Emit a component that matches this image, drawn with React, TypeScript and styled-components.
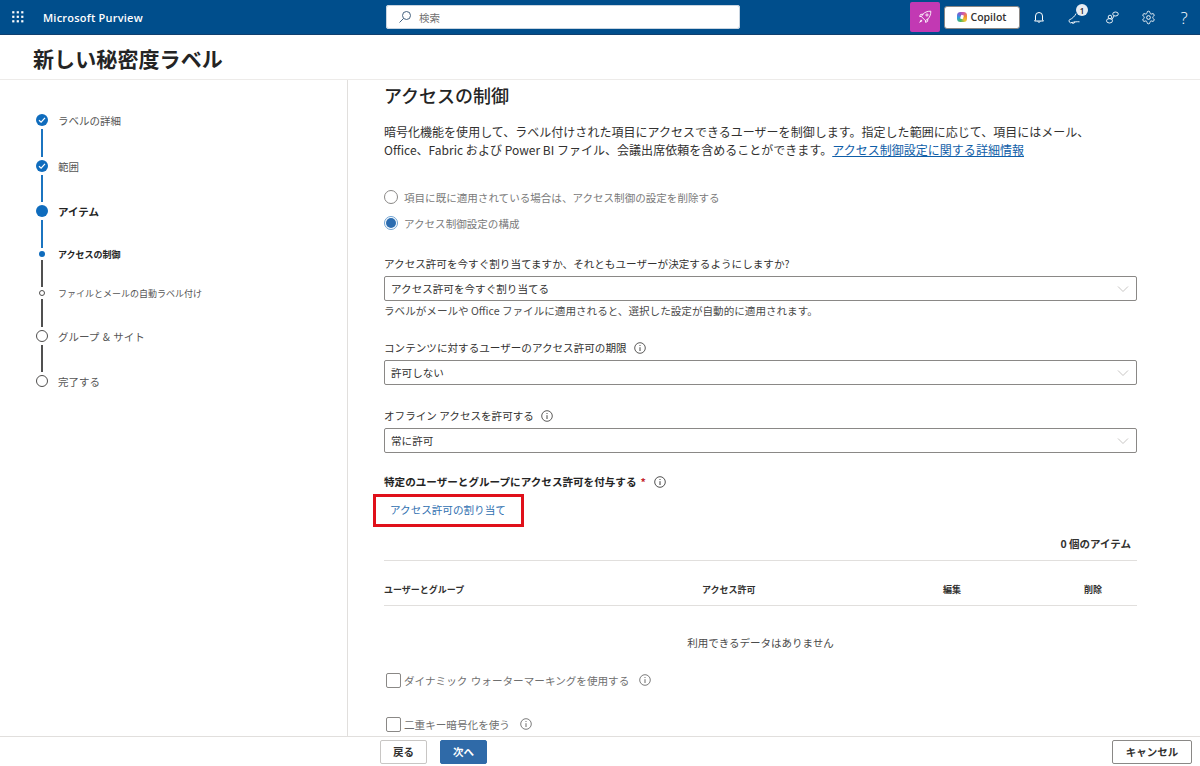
import React from "react";
import styled, { createGlobalStyle } from "styled-components";

const Global = createGlobalStyle`
  html, body { margin: 0; padding: 0; height: 766px; overflow: hidden; background: #fff; }
  body { font-family: "Open Sans", "Noto Sans CJK JP", sans-serif; color: #323130; }
  * { box-sizing: border-box; }
`;

const Page = styled.div`
  width: 1200px; height: 766px; display: flex; flex-direction: column; overflow: hidden;
`;
const TopBar = styled.header`
  height: 35px; flex: none; background: #004e8c; display: flex; align-items: center; color: #fff;
  border-bottom: 1px solid #0f3f6f; position: relative;
`;
const Waffle = styled.button`
  width: 35px; height: 34px; border: 0; background: none; padding: 0; display: flex; align-items: center; justify-content: center; color: #fff;
`;
const Brand = styled.span`
  font-size: 11px; font-weight: 600; margin-left: 8px; width: 343px; letter-spacing: 0.02em;
`;
const Search = styled.div`
  width: 354px; height: 24px; background: #fff; border-radius: 3px; display: flex; align-items: center; padding-left: 12px; gap: 7px;
  font-size: 10.5px; color: #6f6f6f; box-shadow: 0 0 0 1px #c8d4e0 inset; font-family: "Noto Sans CJK JP", sans-serif;
`;
const Right = styled.div`
  margin-left: auto; display: flex; align-items: center; height: 34px;
`;
const Rocket = styled.div`
  width: 30px; height: 30px; background: #c239b3; border-radius: 2px; display: flex; align-items: center; justify-content: center;
`;
const Copilot = styled.div`
  width: 76px; height: 23px; margin-left: 4px; background: #fff; border-radius: 3px; border: 1px solid #8a8886;
  color: #323130; font-size: 10.5px; font-weight: 600; display: flex; align-items: center; justify-content: center; gap: 3px;
`;
const CopilotMark = styled.span`
  width: 10px; height: 10px; border-radius: 35%; position: relative; flex: none;
  background: conic-gradient(from 20deg, #d65ca8, #f28b30, #f2c230, #4cb860, #2a9fe0, #7a60d0, #d65ca8);
  &::after {
    content: ""; position: absolute; left: 3px; top: 3px; width: 4px; height: 4px; border-radius: 1px; background: #fff; transform: rotate(20deg) scaleX(0.7);
  }
`;
const HeadIcon = styled.div<{ $w: number; $pad?: number }>`
  width: ${(p) => p.$w}px; height: 34px; padding-left: ${(p) => p.$pad ?? 0}px; display: flex; align-items: center; justify-content: center; color: #fff; position: relative;
  font-size: 17px; font-weight: 300;
`;
const Badge = styled.span`
  position: absolute; top: 4px; left: 18px; width: 12px; height: 12px; border-radius: 50%; background: #e8edf3; color: #1b1a19;
  font-size: 8px; font-weight: 600; display: flex; align-items: center; justify-content: center;
`;
const TitleBar = styled.div`
  height: 45px; flex: none; border-bottom: 1px solid #edebe9; padding: 8px 0 0 33px;
`;
const PageTitle = styled.h1`
  margin: 0; font-size: 21px; line-height: 31px; font-weight: 700; color: #242424; font-family: "Noto Sans CJK JP", sans-serif; letter-spacing: 0.1px;
`;
const Main = styled.div`
  flex: 1; min-height: 0; display: flex; overflow: hidden;
`;
const Nav = styled.nav`
  width: 348px; flex: none; border-right: 1px solid #e1dfdd; padding: 34px 0 0 36px; display: flex; flex-direction: column; gap: 3px;
`;
const Step = styled.div<{ $h: number }>`
  height: ${(p) => p.$h}px; display: flex; align-items: center; position: relative;
`;
const MarkerSlot = styled.div`
  width: 12px; flex: none; display: flex; align-items: center; justify-content: center;
`;
const Filled = styled.div<{ $d: number }>`
  width: ${(p) => p.$d}px; height: ${(p) => p.$d}px; border-radius: 50%; background: #0f6cbd; flex: none; display: flex; align-items: center; justify-content: center;
`;
const Ring = styled.div<{ $d: number; $b: number }>`
  width: ${(p) => p.$d}px; height: ${(p) => p.$d}px; border-radius: 50%; border: ${(p) => p.$b}px solid #4f4e4d; background: #fff; flex: none;
`;
const StepLabel = styled.span<{ $bold?: boolean; $small?: boolean }>`
  margin-left: 10px; white-space: nowrap; font-family: "Noto Sans CJK JP", sans-serif; word-spacing: 1px;
  font-size: ${(p) => (p.$small ? 9 : 10.5)}px; font-weight: ${(p) => (p.$bold ? 700 : 400)}; color: ${(p) => (p.$bold ? "#242424" : "#555")};
`;
const Connector = styled.div<{ $h: number; $done?: boolean }>`
  width: 2px; height: ${(p) => p.$h}px; margin-left: 5px; flex: none; background: ${(p) => (p.$done ? "#1b74c0" : "#505050")};
`;
const Content = styled.main`
  flex: 1; min-width: 0; padding: 4px 63px 0 36px; overflow: hidden; font-family: "Noto Sans CJK JP", sans-serif;
`;
const H2 = styled.h2`
  margin: 0; font-size: 18px; line-height: 22px; font-weight: 500; color: #242424;
`;
const Desc = styled.div`
  margin: 17px 0 0; font-size: 12px; line-height: 18px; color: #323130; width: 740px; letter-spacing: 0.02px;
`;
const DescLine = styled.div`
  display: flex; white-space: nowrap;
`;
const DescLink = styled.a`
  color: #0f5ea8; text-decoration: underline;
`;
const RadioGroup = styled.div`
  margin-top: 30px; display: flex; flex-direction: column; gap: 10px;
`;
const RadioRow = styled.label`
  height: 16px; display: flex; align-items: center; gap: 6px; font-size: 10.56px; color: #7a7a7a;
`;
const RadioDot = styled.span<{ $on?: boolean }>`
  width: 14px; height: 14px; border-radius: 50%; border: 1px solid ${(p) => (p.$on ? "#6fa3d3" : "#8a8886")}; background: #fff; flex: none;
  display: flex; align-items: center; justify-content: center;
  &::after { content: ""; width: 10px; height: 10px; border-radius: 50%; background: ${(p) => (p.$on ? "#2b6cb0" : "transparent")}; }
`;
const Field = styled.div<{ $top: number }>`
  margin-top: ${(p) => p.$top}px;
`;
const Label = styled.div`
  display: flex; align-items: center; gap: 7px; font-size: 10.58px; line-height: 16px; color: #323130; height: 16px;
`;
const Select = styled.div`
  margin-top: 4px; height: 25px; border: 1px solid #8a8886; border-radius: 2px; display: flex; align-items: center; justify-content: space-between;
  padding: 0 7px 0 6px; font-size: 10.58px; color: #323130; background: #fff;
`;
const Hint = styled.div`
  font-size: 10.58px; line-height: 16px; margin-top: 2px; color: #4a4a4a;
`;
const BoldLabel = styled(Label)`
  font-weight: 700; color: #242424; gap: 8px;
`;
const Star = styled.span`
  color: #c4262e; margin-left: -4px;
`;
const AssignButton = styled.button`
  display: flex; align-items: center; width: 151px; height: 33px; margin: 4px 0 0 -11px; background: #fff; border: 3px solid #e0101a;
  padding: 0 0 2px 14px; color: #2f6fb0; font: inherit; font-size: 10.58px;
`;
const Count = styled.div`
  margin-top: 7px; height: 20px; line-height: 20px; text-align: right; padding-right: 6px; font-size: 10.5px; font-weight: 700; color: #323130;
`;
const TableHead = styled.div`
  margin-top: 6px; height: 46px; border-top: 1px solid #e1dfdd; border-bottom: 1px solid #e1dfdd; display: grid; padding-top: 13px;
  grid-template-columns: 318px 241px 141px 1fr; align-items: center; font-size: 9px; font-weight: 700; color: #323130;
`;
const Empty = styled.div`
  margin-top: 29px; text-align: center; font-size: 10.5px; line-height: 16px; color: #4a4a4a;
`;
const CheckRow = styled.label<{ $top: number }>`
  margin-top: ${(p) => p.$top}px; margin-left: 2px; height: 16px; display: flex; align-items: center; gap: 3px; font-size: 10.6px; color: #6f6f6f; word-spacing: 1px;
`;
const Box = styled.span`
  width: 15px; height: 15px; border: 1px solid #8a8886; border-radius: 2px; background: #fff; flex: none; margin-right: 0;
`;
const InfoWrap = styled.span`
  display: inline-flex; margin-left: 7px; color: #5a5a5a;
`;
const Footer = styled.footer`
  height: 30px; flex: none; border-top: 1px solid #e1dfdd; display: flex; align-items: center; padding: 0 8px 0 380px; gap: 13px; font-family: "Noto Sans CJK JP", sans-serif;
`;
const FootBtn = styled.button<{ $primary?: boolean }>`
  height: 24px; width: 47px; border-radius: 2px; font: inherit; font-size: 10.5px; font-weight: 700; padding: 0;
  border: 1px solid ${(p) => (p.$primary ? "#2f6aa8" : "#c8c6c4")};
  background: ${(p) => (p.$primary ? "#2f6aa8" : "#fff")};
  color: ${(p) => (p.$primary ? "#fff" : "#323130")};
`;
const Cancel = styled(FootBtn)`
  margin-left: auto; width: 80px; border-color: #8a8886;
`;

const Info = ({ size = 12 }: { size?: number }) => (
  <svg width={size} height={size} viewBox="0 0 12 12" fill="none" stroke="currentColor">
    <circle cx="6" cy="6" r="5.3" strokeWidth="0.8" />
    <path d="M6 5.2V9" strokeWidth="0.9" />
    <circle cx="6" cy="3.5" r="0.55" fill="currentColor" stroke="none" />
  </svg>
);
const Chevron = () => (
  <svg width="12" height="8" viewBox="0 0 12 8" fill="none" stroke="#c8c6c4" strokeWidth="1">
    <path d="M1 1.5 6 6.5 11 1.5" />
  </svg>
);
const Check = () => (
  <svg width="8" height="8" viewBox="0 0 8 8" fill="none" stroke="#fff" strokeWidth="1.2">
    <path d="M1 4.2 3.1 6.2 7 1.8" />
  </svg>
);

export default function App() {
  return (
    <Page>
      <Global />
      <TopBar>
        <Waffle aria-label="apps">
          <svg width="12" height="12" viewBox="0 0 12 12" fill="currentColor">
            {[0, 1, 2].flatMap((r) =>
              [0, 1, 2].map((c) => <rect key={`${r}${c}`} x={c * 4.5 + 0.2} y={r * 4.5 + 0.2} width="2.2" height="2.2" />)
            )}
          </svg>
        </Waffle>
        <Brand>Microsoft Purview</Brand>
        <Search>
          <svg width="14" height="14" viewBox="0 0 14 14" fill="none" stroke="#44627f" strokeWidth="1">
            <circle cx="8.5" cy="5.5" r="4" />
            <path d="M5.5 8.5 1.5 12.5" />
          </svg>
          <span>検索</span>
        </Search>
        <Right>
          <Rocket>
            <svg width="14" height="14" viewBox="0 0 14 14" fill="none" stroke="#fff" strokeWidth="0.9">
              <path d="M5 4.2C6.5 2.4 9.5 1 12.8 1.2 13 4.5 11.5 7.5 9.8 9L7.4 10.6 3.4 6.6Z" />
              <circle cx="9" cy="5" r="1.1" />
              <path d="M5 4.2 2.6 4.4 1.6 6.4 3.4 6.6M9.8 9 9.6 11.4 7.6 12.4 7.4 10.6" />
              <path d="M3 9.5 1 13 4.5 11Z" fill="#fff" stroke="none" />
            </svg>
          </Rocket>
          <Copilot>
            <CopilotMark />
            Copilot
          </Copilot>
          <HeadIcon $w={38}>
            <svg width="14" height="14" viewBox="0 0 14 14" fill="none" stroke="currentColor">
              <path d="M3.5 10V6a3.5 3.5 0 0 1 7 0v4l1 1h-9ZM5.8 11.5a1.3 1.3 0 0 0 2.4 0" strokeWidth="1" />
            </svg>
          </HeadIcon>
          <HeadIcon $w={34}>
            <svg width="16" height="16" viewBox="0 0 16 16" fill="none" stroke="currentColor" strokeWidth="0.9">
              <path d="M9 4.5C8 7 5.5 9.5 2.5 10.8 2 11 1.8 11.5 2 12l.7 1.4c.2.4.7.6 1.1.4C7 13 10 12.5 12.5 12.8" />
              <path d="M4.5 13.4a1.8 1.8 0 0 0 3.4-.9" />
            </svg>
            <Badge>1</Badge>
          </HeadIcon>
          <HeadIcon $w={40}>
            <svg width="15" height="15" viewBox="0 0 15 15" fill="none" stroke="currentColor" strokeWidth="0.9">
              <ellipse cx="4.5" cy="10.8" rx="3" ry="2.2" />
              <circle cx="5" cy="7" r="1.8" />
              <ellipse cx="10.5" cy="4" rx="2.8" ry="2" />
              <path d="M7 9.5 9 6" />
            </svg>
          </HeadIcon>
          <HeadIcon $w={32}>
            <svg width="15" height="15" viewBox="0 0 24 24" fill="none" stroke="currentColor" strokeWidth="1.5">
              <path d="M12.22 2h-.44a2 2 0 0 0-2 2v.18a2 2 0 0 1-1 1.73l-.43.25a2 2 0 0 1-2 0l-.15-.08a2 2 0 0 0-2.73.73l-.22.38a2 2 0 0 0 .73 2.73l.15.1a2 2 0 0 1 1 1.72v.51a2 2 0 0 1-1 1.74l-.15.09a2 2 0 0 0-.73 2.73l.22.38a2 2 0 0 0 2.73.73l.15-.08a2 2 0 0 1 2 0l.43.25a2 2 0 0 1 1 1.73V20a2 2 0 0 0 2 2h.44a2 2 0 0 0 2-2v-.18a2 2 0 0 1 1-1.73l.43-.25a2 2 0 0 1 2 0l.15.08a2 2 0 0 0 2.73-.73l.22-.39a2 2 0 0 0-.73-2.73l-.15-.08a2 2 0 0 1-1-1.74v-.5a2 2 0 0 1 1-1.74l.15-.09a2 2 0 0 0 .73-2.73l-.22-.38a2 2 0 0 0-2.73-.73l-.15.08a2 2 0 0 1-2 0l-.43-.25a2 2 0 0 1-1-1.73V4a2 2 0 0 0-2-2z" />
              <circle cx="12" cy="12" r="3" />
            </svg>
          </HeadIcon>
          <HeadIcon $w={36} $pad={4}>?</HeadIcon>
        </Right>
      </TopBar>
      <TitleBar>
        <PageTitle>新しい秘密度ラベル</PageTitle>
      </TitleBar>
      <Main>
        <Nav>
          <Step $h={12}><MarkerSlot><Filled $d={12}><Check /></Filled></MarkerSlot><StepLabel>ラベルの詳細</StepLabel></Step>
          <Connector $h={28} $done />
          <Step $h={12}><MarkerSlot><Filled $d={12}><Check /></Filled></MarkerSlot><StepLabel>範囲</StepLabel></Step>
          <Connector $h={27} $done />
          <Step $h={12}><MarkerSlot><Filled $d={12} /></MarkerSlot><StepLabel $bold>アイテム</StepLabel></Step>
          <Connector $h={28} $done />
          <Step $h={6}><MarkerSlot><Filled $d={6} /></MarkerSlot><StepLabel $bold $small>アクセスの制御</StepLabel></Step>
          <Connector $h={27} />
          <Step $h={6}><MarkerSlot><Ring $d={6} $b={1.5} /></MarkerSlot><StepLabel $small>ファイルとメールの自動ラベル付け</StepLabel></Step>
          <Connector $h={28} />
          <Step $h={12}><MarkerSlot><Ring $d={12} $b={1.5} /></MarkerSlot><StepLabel>グループ &amp; サイト</StepLabel></Step>
          <Connector $h={27} />
          <Step $h={12}><MarkerSlot><Ring $d={12} $b={1.5} /></MarkerSlot><StepLabel>完了する</StepLabel></Step>
        </Nav>
        <Content>
          <H2>アクセスの制御</H2>
          <Desc>
            <DescLine>
              <span>暗号化機能を使用して、ラベル付けされた項目にアクセスできるユーザーを制御します。指定した範囲に応じて、項目にはメール、</span>
            </DescLine>
            <DescLine>
              <span>Office、Fabric および Power BI ファイル、会議出席依頼を含めることができます。</span>
              <DescLink href="#">アクセス制御設定に関する詳細情報</DescLink>
            </DescLine>
          </Desc>
          <RadioGroup>
            <RadioRow><RadioDot />項目に既に適用されている場合は、アクセス制御の設定を削除する</RadioRow>
            <RadioRow><RadioDot $on />アクセス制御設定の構成</RadioRow>
          </RadioGroup>
          <Field $top={25}>
            <Label>アクセス許可を今すぐ割り当てますか、それともユーザーが決定するようにしますか?</Label>
            <Select>アクセス許可を今すぐ割り当てる<Chevron /></Select>
            <Hint>ラベルがメールや Office ファイルに適用されると、選択した設定が自動的に適用されます。</Hint>
          </Field>
          <Field $top={21}>
            <Label>コンテンツに対するユーザーのアクセス許可の期限<Info /></Label>
            <Select>許可しない<Chevron /></Select>
          </Field>
          <Field $top={23}>
            <Label>オフライン アクセスを許可する<Info /></Label>
            <Select>常に許可<Chevron /></Select>
          </Field>
          <Field $top={21}>
            <BoldLabel>特定のユーザーとグループにアクセス許可を付与する<Star>*</Star><Info /></BoldLabel>
            <AssignButton>アクセス許可の割り当て</AssignButton>
          </Field>
          <Count>0 個のアイテム</Count>
          <TableHead>
            <span>ユーザーとグループ</span>
            <span>アクセス許可</span>
            <span>編集</span>
            <span>削除</span>
          </TableHead>
          <Empty>利用できるデータはありません</Empty>
          <CheckRow $top={21}><Box />ダイナミック ウォーターマーキングを使用する<InfoWrap><Info /></InfoWrap></CheckRow>
          <CheckRow $top={28}><Box />二重キー暗号化を使う<InfoWrap><Info /></InfoWrap></CheckRow>
        </Content>
      </Main>
      <Footer>
        <FootBtn>戻る</FootBtn>
        <FootBtn $primary>次へ</FootBtn>
        <Cancel>キャンセル</Cancel>
      </Footer>
    </Page>
  );
}
